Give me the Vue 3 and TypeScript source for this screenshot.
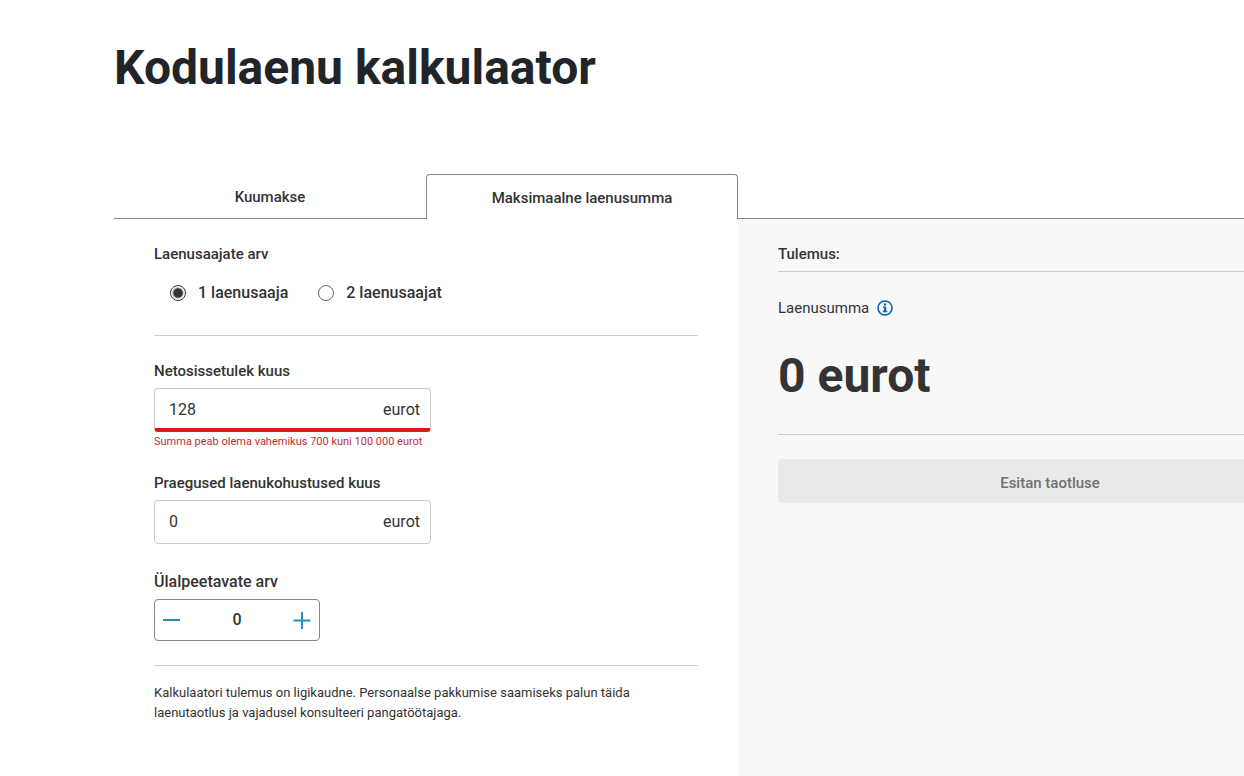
<script setup lang="ts">
import { computed, ref } from 'vue'

type Tab = 'monthly' | 'maximum'

const tabs: { id: Tab; label: string }[] = [
  { id: 'monthly', label: 'Kuumakse' },
  { id: 'maximum', label: 'Maksimaalne laenusumma' },
]
const activeTab = ref<Tab>('maximum')

const borrowerOptions = [
  { value: 1, label: '1 laenusaaja' },
  { value: 2, label: '2 laenusaajat' },
]
const borrowers = ref(1)
const income = ref('128')
const obligations = ref('0')
const dependants = ref(0)

const incomeInvalid = computed(() => {
  const amount = Number(income.value)
  return !(amount >= 700 && amount <= 100000)
})

function changeDependants(step: number) {
  dependants.value = Math.max(0, dependants.value + step)
}
</script>

<template>
  <main class="page">
    <h1>Kodulaenu kalkulaator</h1>

    <div class="tabs" role="tablist">
      <button
        v-for="tab in tabs"
        :key="tab.id"
        type="button"
        role="tab"
        class="tab"
        :class="{ active: activeTab === tab.id }"
        :aria-selected="activeTab === tab.id"
        @click="activeTab = tab.id"
      >
        {{ tab.label }}
      </button>
      <span class="tabs-rest"></span>
    </div>

    <div class="calculator">
      <form class="inputs" @submit.prevent>
        <fieldset class="borrowers">
          <legend class="label">Laenusaajate arv</legend>
          <div class="radios">
            <label v-for="option in borrowerOptions" :key="option.value" class="radio">
              <input v-model="borrowers" type="radio" name="borrowers" :value="option.value" />
              <span>{{ option.label }}</span>
            </label>
          </div>
        </fieldset>

        <div class="field">
          <label class="label" for="income">Netosissetulek kuus</label>
          <div class="amount" :class="{ invalid: incomeInvalid }">
            <input id="income" v-model="income" type="text" inputmode="numeric" :aria-invalid="incomeInvalid" aria-describedby="income-error" />
            <span>eurot</span>
          </div>
          <p v-if="incomeInvalid" id="income-error" class="error">Summa peab olema vahemikus 700 kuni 100 000 eurot</p>
        </div>

        <div class="field">
          <label class="label" for="obligations">Praegused laenukohustused kuus</label>
          <div class="amount">
            <input id="obligations" v-model="obligations" type="text" inputmode="numeric" />
            <span>eurot</span>
          </div>
        </div>

        <div class="field dependants">
          <label class="label" for="dependants">Ülalpeetavate arv</label>
          <div class="stepper">
            <button type="button" aria-label="Vähenda" @click="changeDependants(-1)">
              <svg width="18" height="18" viewBox="0 0 18 18"><path d="M0 9H17" /></svg>
            </button>
            <input id="dependants" v-model.number="dependants" type="text" inputmode="numeric" />
            <button type="button" aria-label="Suurenda" @click="changeDependants(1)">
              <svg width="18" height="18" viewBox="0 0 18 18"><path d="M0.5 9.5H17.5M9 1V18" /></svg>
            </button>
          </div>
        </div>

        <p class="note">
          Kalkulaatori tulemus on ligikaudne. Personaalse pakkumise saamiseks palun täida laenutaotlus ja vajadusel
          konsulteeri pangatöötajaga.
        </p>
      </form>

      <section class="result">
        <h2 class="label">Tulemus:</h2>
        <div class="summary">
          <div class="sum-label">
            <span>Laenusumma</span>
            <button type="button" class="info" aria-label="Lisainfo">
              <svg width="16" height="16" viewBox="0 0 16 16">
                <circle cx="8" cy="8" r="7" fill="none" stroke="#0b63b5" stroke-width="1.6" />
                <path d="M7 3.5h2.2v2H7zM6 6.5h3.2v4.3h1.1v1.5H5.8v-1.5H7V8H6z" fill="#0b63b5" />
              </svg>
            </button>
          </div>
          <output class="sum">0 eurot</output>
        </div>
        <button type="button" class="submit" disabled>Esitan taotluse</button>
      </section>
    </div>
  </main>
</template>

<style>
body {
  margin: 0;
  background: #fff;
  overflow-x: hidden;
}
</style>

<style scoped>
.page {
  display: flex;
  flex-direction: column;
  box-sizing: border-box;
  min-height: 100vh;
  padding-left: 114px;
  overflow: hidden;
  color: #333;
  font: 400 15px/22px Roboto, "Liberation Sans", sans-serif;
}

button,
input {
  font: inherit;
  color: inherit;
  margin: 0;
  padding: 0;
}

button {
  border: 0;
  background: none;
  cursor: pointer;
}

h1 {
  margin: 0;
  padding: 40px 0 78px;
  color: #212529;
  font-size: 48px;
  line-height: 56px;
  font-weight: 700;
}

.tabs {
  display: flex;
  height: 45px;
}

.tab {
  box-sizing: border-box;
  width: 312px;
  padding-top: 2px;
  border-bottom: 1px solid #868686;
  font-weight: 500;
}

.tab.active {
  border: 1px solid #868686;
  border-bottom: 0;
  border-radius: 4px 4px 0 0;
}

.tabs-rest {
  flex: 1;
  border-bottom: 1px solid #868686;
}

.calculator {
  display: grid;
  flex: 1;
  grid-template-columns: minmax(624px, 1fr) minmax(624px, 1fr);
}

.inputs {
  padding: 24px 40px 40px;
}

.label {
  display: block;
  margin: 0;
  padding: 0;
  font-size: 15px;
  line-height: 22px;
  font-weight: 500;
}

.borrowers {
  margin: 0 0 24px;
  padding: 0 0 30px;
  border: 0;
  border-bottom: 1px solid #ccc;
}

.radios {
  display: flex;
  gap: 30px;
  padding: 16px 0 0 16px;
}

.radio {
  display: flex;
  align-items: center;
  gap: 12px;
  font-size: 16px;
  line-height: 24px;
  font-weight: 500;
}

.radio input {
  appearance: none;
  box-sizing: border-box;
  width: 16px;
  height: 16px;
  border: 1px solid #666;
  border-radius: 50%;
  background: #fff;
}

.radio input:checked {
  border-color: #333;
  background: radial-gradient(circle, #333 4px, #fff 6px);
}

.field {
  margin-bottom: 22px;
}

.amount {
  display: flex;
  align-items: center;
  box-sizing: border-box;
  width: 277px;
  height: 44px;
  margin-top: 6px;
  padding: 0 10px 0 14px;
  border: 1px solid #ccc;
  border-radius: 4px;
  font-size: 16px;
}

.amount.invalid {
  border-bottom: 4px solid #d81a1a;
  padding-top: 3px;
}

.amount input {
  flex: 1;
  min-width: 0;
  border: 0;
  outline: 0;
  background: none;
}

.error {
  margin: 2px 0 0;
  color: #bb3038;
  font-size: 11px;
  line-height: 16px;
  white-space: nowrap;
}

.dependants {
  margin: 27px 0 0;
  padding-bottom: 24px;
  border-bottom: 1px solid #ccc;
}

.dependants .label {
  font-size: 16px;
}

.stepper {
  display: flex;
  align-items: center;
  justify-content: space-between;
  box-sizing: border-box;
  width: 166px;
  height: 42px;
  margin-top: 6px;
  padding: 0 8px;
  border: 1px solid #868686;
  border-radius: 4px;
}

.stepper button {
  display: flex;
}

.stepper svg {
  fill: none;
  stroke: #2190c4;
  stroke-width: 2;
}

.stepper input {
  width: 80px;
  border: 0;
  outline: 0;
  background: none;
  font-size: 16px;
  font-weight: 500;
  text-align: center;
}

.note {
  margin: 17px 0 0;
  font-size: 13px;
  line-height: 20px;
}

.result {
  padding: 24px 40px;
  background: #f8f8f8;
}

.summary {
  margin-top: 6px;
  padding: 25px 0 30px;
  border: solid #ccc;
  border-width: 1px 0;
}

.sum-label {
  display: flex;
  align-items: center;
  gap: 8px;
}

.info {
  display: flex;
}

.sum {
  display: block;
  margin-top: 29px;
  font-size: 48px;
  line-height: 56px;
  font-weight: 700;
}

.submit {
  width: 100%;
  height: 44px;
  margin-top: 24px;
  padding-top: 4px;
  border-radius: 4px;
  background: #e9e9e9;
  color: #707070;
  font-weight: 500;
  cursor: default;
}
</style>
